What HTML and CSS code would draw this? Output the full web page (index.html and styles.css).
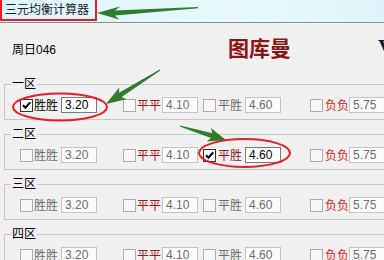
FILE: index.html
```html
<!DOCTYPE html>
<html lang="zh">
<head>
<meta charset="utf-8">
<title>三元均衡计算器</title>
<link rel="stylesheet" href="styles.css">
</head>
<body>
<div class="window">
  <div class="titlebar"><span class="title">三元均衡计算器</span></div>
  <div class="header">
    <span class="date">周日046</span>
    <span class="brand">图库曼</span>
    <span class="trail">V</span>
  </div>

  <fieldset class="zone">
    <legend>一区</legend>
    <div class="row">
      <div class="opt on"><span class="cb checked"><svg viewBox="0 0 11 11" width="11" height="11"><path d="M2 5.2 L4.4 7.8 L9.2 2.4" fill="none" stroke="#000" stroke-width="2.1"/></svg></span><span class="lbl win">胜胜</span><span class="val">3.20</span></div>
      <div class="opt"><span class="cb"></span><span class="lbl draw">平平</span><span class="val">4.10</span></div>
      <div class="opt"><span class="cb"></span><span class="lbl dw">平胜</span><span class="val">4.60</span></div>
      <div class="opt"><span class="cb"></span><span class="lbl lose">负负</span><span class="val">5.75</span></div>
    </div>
  </fieldset>

  <fieldset class="zone">
    <legend>二区</legend>
    <div class="row">
      <div class="opt"><span class="cb"></span><span class="lbl win">胜胜</span><span class="val">3.20</span></div>
      <div class="opt"><span class="cb"></span><span class="lbl draw">平平</span><span class="val">4.10</span></div>
      <div class="opt on"><span class="cb checked"><svg viewBox="0 0 11 11" width="11" height="11"><path d="M2 5.2 L4.4 7.8 L9.2 2.4" fill="none" stroke="#000" stroke-width="2.1"/></svg></span><span class="lbl dw">平胜</span><span class="val">4.60</span></div>
      <div class="opt"><span class="cb"></span><span class="lbl lose">负负</span><span class="val">5.75</span></div>
    </div>
  </fieldset>

  <fieldset class="zone">
    <legend>三区</legend>
    <div class="row">
      <div class="opt"><span class="cb"></span><span class="lbl win">胜胜</span><span class="val">3.20</span></div>
      <div class="opt"><span class="cb"></span><span class="lbl draw">平平</span><span class="val">4.10</span></div>
      <div class="opt"><span class="cb"></span><span class="lbl dw">平胜</span><span class="val">4.60</span></div>
      <div class="opt"><span class="cb"></span><span class="lbl lose">负负</span><span class="val">5.75</span></div>
    </div>
  </fieldset>

  <fieldset class="zone">
    <legend>四区</legend>
    <div class="row">
      <div class="opt"><span class="cb"></span><span class="lbl win">胜胜</span><span class="val">3.20</span></div>
      <div class="opt"><span class="cb"></span><span class="lbl draw">平平</span><span class="val">4.10</span></div>
      <div class="opt"><span class="cb"></span><span class="lbl dw">平胜</span><span class="val">4.60</span></div>
      <div class="opt"><span class="cb"></span><span class="lbl lose">负负</span><span class="val">5.75</span></div>
    </div>
  </fieldset>

  <svg class="marks" viewBox="0 0 384 260" width="384" height="260">
    <ellipse cx="60" cy="107" rx="47" ry="13.5" fill="none" stroke="#ea1d25" stroke-width="2"/>
    <ellipse cx="244.5" cy="153" rx="45.5" ry="14" fill="none" stroke="#ea1d25" stroke-width="2"/>
    <polygon points="97,13 120,6.5 115,10.6 198,7 198,8.2 115,15.6 119,19.6" fill="#2e7d2e"/>
    <polygon points="106,104 126.6,99.2 121.7,97 160.3,70.5 159.7,69.5 119.1,92.8 119.2,87.4" fill="#2e7d2e"/>
    <polygon points="226,140 206.8,141.5 211,138.1 179.8,126.6 180.2,125.4 212.4,133.3 210.8,128.1" fill="#2e7d2e"/>
  </svg>
</div>
</body>
</html>
```

FILE: styles.css
```css
html, body {
  margin: 0;
  padding: 0;
}
body {
  width: 384px;
  height: 260px;
  overflow: hidden;
  background: #f0f0f0;
  font-family: "Liberation Sans", "Noto Sans CJK SC", sans-serif;
  font-size: 12px;
  color: #000;
}
.window {
  position: relative;
  height: 260px;
  overflow: hidden;
}
.titlebar {
  height: 22px;
  border-bottom: 1px solid #8f8f8f;
  background: linear-gradient(to right, #dcf3fa, #e9f9fd 60%, #dff4fa);
}
.title {
  display: inline-block;
  box-sizing: border-box;
  width: 97px;
  height: 21px;
  border: 2px solid #ec1c24;
  border-top: 0;
  padding-left: 3px;
  line-height: 20px;
  color: #1c1c2c;
  white-space: nowrap;
}
.header {
  display: flex;
  align-items: flex-start;
  height: 54px;
}
.date {
  margin: 20px 0 0 12px;
  width: 216px;
  line-height: 14px;
  flex: none;
}
.brand {
  margin-top: 12px;
  width: 150px;
  flex: none;
  font-family: "Noto Sans CJK SC", sans-serif;
  font-size: 21px;
  line-height: 24px;
  font-weight: bold;
  color: #8b1414;
}
.trail {
  margin-top: 11px;
  flex: none;
  font-family: "Liberation Serif", serif;
  font-weight: bold;
  font-size: 22px;
  line-height: 26px;
  color: #14143c;
}
.zone {
  margin: 0 0 7px 4px;
  padding: 6px 0 6px 0;
  border: 1px solid #c8c8c8;
  width: 420px;
  min-width: 0;
}
.zone legend {
  margin-left: 6px;
  padding: 0 1px;
  line-height: 14px;
}
.row {
  display: grid;
  grid-template-columns: 103px 80px 107px 80px;
  padding-left: 15px;
  height: 16px;
}
.opt {
  display: flex;
  align-items: center;
  height: 16px;
}
.cb {
  box-sizing: border-box;
  flex: none;
  width: 13px;
  height: 13px;
  border: 1px solid #adadad;
  background: #f7f7f7;
  display: flex;
}
.cb.checked {
  border-color: #333;
  background: #fff;
}
.lbl {
  flex: none;
  width: 24px;
  line-height: 14px;
  white-space: nowrap;
  font-family: "Noto Sans CJK SC", sans-serif;
}
.val {
  box-sizing: border-box;
  flex: none;
  width: 36px;
  height: 16px;
  border: 1px solid #c3c3c3;
  background: #fbfbfb;
  color: #6d6d6d;
  padding-left: 3px;
  line-height: 14px;
}
.on .val {
  border-color: #7a7a7a;
  background: #fff;
  color: #000;
}
.win, .dw { color: #6d6d6d; }
.on .win { color: #000; }
.on .dw { color: #8b1a1a; }
.draw { color: #9e1a1a; }
.lose { color: #e2231a; }

.opt:nth-child(1) .lbl { margin-left: 1px; }
.opt:nth-child(1) .val { margin-left: 3px; }
.opt:nth-child(2) .lbl { margin-left: 1px; }
.opt:nth-child(2) .val { margin-left: 1px; }
.opt:nth-child(3) .lbl { margin-left: 2px; }
.opt:nth-child(3) .val { margin-left: 3px; }
.opt:nth-child(4) .lbl { margin-left: 2px; }
.opt:nth-child(4) .val { margin-left: 0; }

.marks {
  position: absolute;
  left: 0;
  top: 0;
  pointer-events: none;
}
```
